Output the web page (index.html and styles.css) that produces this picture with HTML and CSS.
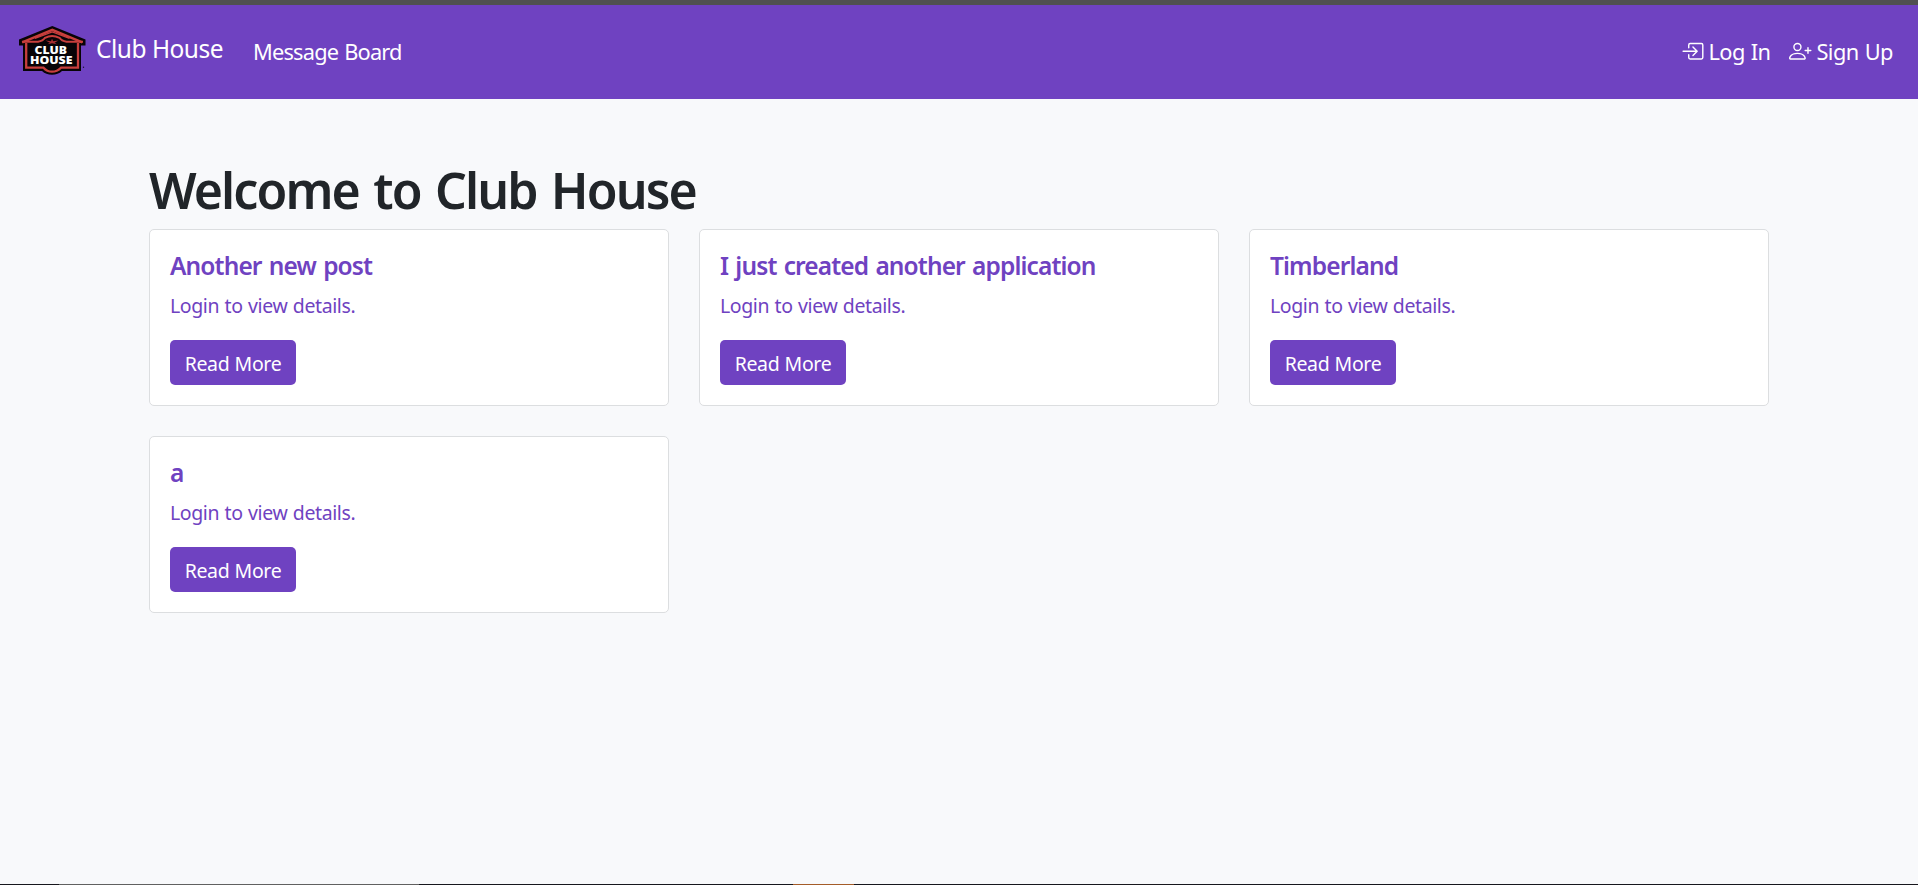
FILE: index.html
```html
<!DOCTYPE html>
<html lang="en">
<head>
<meta charset="utf-8">
<title>Club House</title>
<link rel="stylesheet" href="styles.css">
</head>
<body>
<nav class="navbar">
  <a class="brand">
    <svg class="logo" viewBox="0 0 70 52" width="70" height="52">
      <path fill="#080407" d="M34.3 0 67.500 13.500V19.500H63V45H44Q40 48.800 34 48.800T24 45H5V19.500H1V13.500Z"/>
      <path fill="none" stroke="#c83f3d" stroke-width="2.400" d="M4.200 16.300 34.300 3.900 64.300 16.300"/>
      <path fill="none" stroke="#c83f3d" stroke-width="2.300" d="M8.200 17V41.700H25.500Q29 45.700 34 45.700T43 41.700H60V17"/>
      <path fill="none" stroke="#c83f3d" stroke-width="2" d="M4 15.800H20Q25 15 27 11.800Q34 8 41.500 11.800Q43.500 15 48.500 15.800H65"/>
      <path fill="none" stroke="#c83f3d" stroke-width="1.300" d="M17 12.400 34.300 6 51.500 12.400"/>
      <path fill="#a92e31" d="M27.500 14.500 33 15.300 34 12.800 35.200 15.300 40.500 14.500 36.500 16.700 39 18.200 34 17.200 29.500 18.200 32 16.700Z"/>
      <text class="logo-text"><tspan x="16.500" y="27.800" textLength="32.500" lengthAdjust="spacingAndGlyphs">CLUB</tspan><tspan x="12" y="37.500" textLength="42.500" lengthAdjust="spacingAndGlyphs">HOUSE</tspan></text>
      <circle fill="#1c0d33" cx="65.500" cy="41.300" r=".7"/>
    </svg>
    <span class="brand-name">Club House</span>
  </a>
  <a class="nav-link board">Message Board</a>
  <div class="account">
    <a class="nav-link login">
      <svg class="icon" viewBox="0 0 16 16" fill="currentColor"><path fill-rule="evenodd" d="M6 3.500a.5.500 0 0 1 .5-.5h8a.5.500 0 0 1 .5.500v9a.5.500 0 0 1-.5.500h-8a.5.500 0 0 1-.5-.5v-2a.5.500 0 0 0-1 0v2A1.500 1.500 0 0 0 6.500 14h8a1.500 1.500 0 0 0 1.500-1.500v-9A1.500 1.500 0 0 0 14.500 2h-8A1.500 1.500 0 0 0 5 3.500v2a.5.500 0 0 0 1 0z"/><path fill-rule="evenodd" d="M11.854 8.354a.5.500 0 0 0 0-.708l-3-3a.5.500 0 1 0-.708.708L10.293 7.500H1.500a.5.500 0 0 0 0 1h8.793l-2.147 2.146a.5.500 0 0 0 .708.708z"/></svg>
      <span>Log In</span>
    </a>
    <a class="nav-link signup">
      <svg class="icon" viewBox="0 0 16 16" fill="currentColor"><path d="M6 8a3 3 0 1 0 0-6 3 3 0 0 0 0 6m2-3a2 2 0 1 1-4 0 2 2 0 0 1 4 0m4 8c0 1-1 1-1 1H1s-1 0-1-1 1-4 6-4 6 3 6 4m-1-.004c-.001-.246-.154-.986-.832-1.664C9.516 10.680 8.289 10 6 10s-3.516.680-4.168 1.332c-.678.678-.830 1.418-.832 1.664z"/><path fill-rule="evenodd" d="M13.500 5a.5.500 0 0 1 .5.500V7h1.500a.5.500 0 0 1 0 1H14v1.500a.5.500 0 0 1-1 0V8h-1.500a.5.500 0 0 1 0-1H13V5.500a.5.500 0 0 1 .5-.5"/></svg>
      <span>Sign Up</span>
    </a>
  </div>
</nav>
<main class="container">
  <h1 class="heading">Welcome to Club House</h1>
  <div class="posts">
    <article class="card">
      <h5 class="card-title">Another new post</h5>
      <p class="card-text">Login to view details.</p>
      <a class="btn">Read More</a>
    </article>
    <article class="card">
      <h5 class="card-title">I just created another application</h5>
      <p class="card-text">Login to view details.</p>
      <a class="btn">Read More</a>
    </article>
    <article class="card">
      <h5 class="card-title">Timberland</h5>
      <p class="card-text">Login to view details.</p>
      <a class="btn">Read More</a>
    </article>
    <article class="card">
      <h5 class="card-title">a</h5>
      <p class="card-text">Login to view details.</p>
      <a class="btn">Read More</a>
    </article>
  </div>
</main>
<footer class="edge"></footer>
</body>
</html>
```
FILE: styles.css
```css
* { box-sizing: border-box; }

body {
  display: flex;
  flex-direction: column;
  height: 885px;
  margin: 0;
  overflow: hidden;
  background: #f8f9fb;
  color: #212529;
  font-family: "Noto Sans", "Open Sans", sans-serif;
  font-size: 19.500px;
}

.navbar {
  display: flex;
  align-items: center;
  height: 99px;
  padding: 0 24px 0 18px;
  border-top: 5px solid #505050;
  background: #6f42c1;
  color: #fff;
}

.brand {
  display: flex;
  width: 235px;
  gap: 7px;
}

.logo { flex: none; }

.logo-text {
  fill: #fff;
  font-family: "Open Sans", "Noto Sans", sans-serif;
  font-size: 10.800px;
  font-weight: 800;
}

.brand-name {
  padding: 6px 0 0 1px;
  font-size: 24.500px;
  line-height: 34px;
  letter-spacing: -0.500px;
  white-space: nowrap;
}

.nav-link {
  padding-bottom: 1px;
  font-size: 21.800px;
  line-height: 34px;
  letter-spacing: -0.800px;
  word-spacing: 1px;
  white-space: nowrap;
}

.account {
  display: flex;
  gap: 20px;
  margin-left: auto;
}

.account .nav-link {
  display: flex;
  align-items: center;
  gap: 5px;
  letter-spacing: -0.600px;
}

.login { width: 88px; }
.signup { width: 105px; }

.icon {
  flex: none;
  width: 22.500px;
  height: 22.500px;
}

.container {
  flex: 1;
  width: 1620px;
  margin: 0 auto;
  padding-top: 61px;
}

.heading {
  margin: 0 0 9px;
  font-size: 50px;
  font-weight: 600;
  line-height: 60px;
  letter-spacing: -1.900px;
  word-spacing: 3.200px;
  white-space: nowrap;
}

.posts {
  display: grid;
  grid-template-columns: repeat(3, 520px);
  gap: 30px;
}

.card {
  height: 177px;
  padding: 21px 20px 20px;
  border: 1px solid #dcdee0;
  border-radius: 5px;
  background: #fff;
  color: #6f42c1;
}

.card-title {
  margin: 0 0 10px;
  font-size: 24.500px;
  font-weight: 600;
  line-height: 30px;
  letter-spacing: -0.880px;
  word-spacing: 1.700px;
  white-space: nowrap;
}

.card-text {
  margin: 0 0 19px;
  line-height: 30px;
  letter-spacing: -0.400px;
  word-spacing: 0.800px;
}

.btn {
  display: flex;
  align-items: center;
  justify-content: center;
  width: 126px;
  height: 45px;
  padding-top: 1px;
  border-radius: 5px;
  background: #6f42c1;
  color: #fff;
  letter-spacing: -0.350px;
  word-spacing: 0.500px;
  white-space: nowrap;
}

.edge {
  height: 1px;
  background: linear-gradient(to right, #17171d 59px, #606060 59px 419px, #17171d 419px 793px, #a45c28 793px 854px, #17171d 854px);
}
```
